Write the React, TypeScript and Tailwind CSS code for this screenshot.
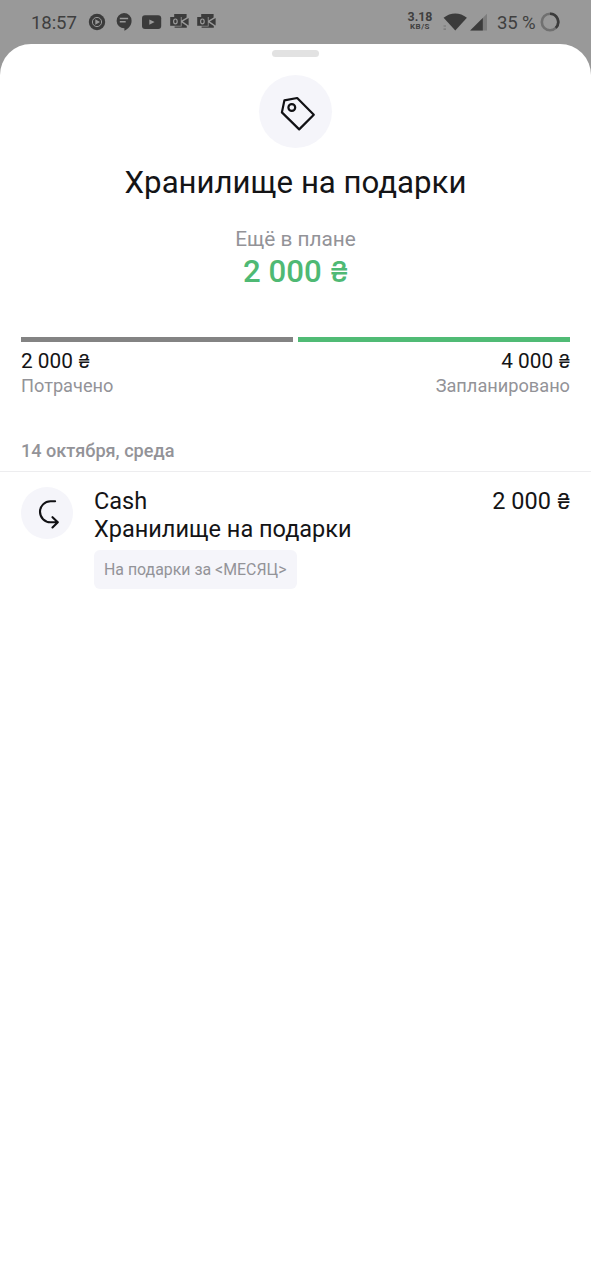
import React from "react";

function Money({ amount }: { amount: string }) {
  return (
    <>
      {amount} <span className="font-['Inter'] text-[0.93em] leading-none tracking-[-0.03em]">₴</span>
    </>
  );
}

function MailIcon() {
  return (
    <svg width="19" height="16" viewBox="0 0 19 16" fill="#3b3b3b">
      <path d="M4.2 1H16.6V4.4L11.6 7.4V4H4.2Z" />
      <path d="M0.2 4H10.8V12.8H0.2Z" />
      <path d="M18.6 5V12.4L12.8 8.5Z" />
      <path d="M11.6 9.4L16.8 13V14.8H4.6V13.4H11.6Z" />
      <ellipse cx="5.4" cy="8.4" rx="1.8" ry="2.4" fill="none" stroke="#999" strokeWidth="1.2" />
    </svg>
  );
}

function StatusBar() {
  return (
    <header className="flex h-11 items-start text-[#3f3f3f]">
      <span className="ml-[31px] mt-[11px] w-[46px] whitespace-nowrap text-[18.6px] leading-6 tracking-[-0.1px]">18:57</span>
      <svg className="ml-[11px] mt-[13px]" width="18" height="18" viewBox="0 0 18 18">
        <circle cx="9" cy="9" r="8.2" fill="#3b3b3b" />
        <circle cx="9" cy="9" r="4.6" fill="none" stroke="#999" strokeWidth="1" />
        <path d="M7.3 6.2L12 9L7.3 11.8Z" fill="#999" />
      </svg>
      <svg className="ml-[10px] mt-[13px]" width="17" height="19" viewBox="0 0 17 19">
        <path d="M8 0.1A7.6 7.6 0 0 1 15.6 7.7C15.6 12.3 12.4 15.8 8.4 17.8V15.3A7.6 7.6 0 1 1 8 0.1Z" fill="#3b3b3b" />
        <path d="M3.8 5.6H12.1M3.8 8.8H9.7" stroke="#999" strokeWidth="1.5" />
      </svg>
      <svg className="ml-[8px] mt-[15px]" width="21" height="15" viewBox="0 0 21 15">
        <rect x="1" y="0.2" width="19.2" height="13.8" rx="3" fill="#3b3b3b" />
        <path d="M8.3 4.4L13.6 7.1L8.3 9.8Z" fill="#999" />
      </svg>
      <div className="ml-[8px] mt-[13px] flex gap-2">
        <MailIcon />
        <MailIcon />
      </div>
      <div className="ml-auto mr-[10px] mt-[11px] w-[26px] text-center font-bold">
        <div className="text-[12.4px] leading-[12px]">3.18</div>
        <div className="text-[8px] leading-[8px] tracking-[0.5px]">KB/S</div>
      </div>
      <svg className="mt-[13px]" width="25" height="18" viewBox="0 0 25 18">
        <path d="M0.6 4.7C7.5 -1 17 -1 23.9 4.7L12.3 17.6Z" fill="#3b3b3b" />
        <path d="M0.5 13H3M0.5 16.2H3" stroke="#777" strokeWidth="1.2" />
      </svg>
      <svg className="ml-[2px] mt-[13px]" width="18" height="18" viewBox="0 0 18 18">
        <path d="M17 0.8V17.6H0.2Z" fill="#7d7d7d" />
        <path d="M12.8 5V17.6H0.2Z" fill="#3b3b3b" />
      </svg>
      <span className="ml-[9px] mt-[11px] w-[40px] whitespace-nowrap text-[18.6px] leading-6 tracking-[-0.2px]">35 %</span>
      <svg className="ml-[3px] mr-[31px] mt-[12px]" width="20" height="20" viewBox="0 0 20 20" fill="none" strokeWidth="2.6">
        <circle cx="10" cy="10" r="8.2" stroke="#707070" />
        <path d="M10 1.8A8.2 8.2 0 0 1 15.8 15.8" stroke="#3b3b3b" />
      </svg>
    </header>
  );
}

function TagIcon() {
  return (
    <svg width="73" height="73" viewBox="0 0 73 73" fill="none" stroke="#111114" strokeWidth="2.2" strokeLinejoin="round">
      <path d="M25.4 25.4L38.2 23L54.8 39.7L40.2 54.4L22.9 37.4Z" />
      <circle cx="32.8" cy="32.5" r="3.4" />
    </svg>
  );
}

function TransferIcon() {
  return (
    <svg width="52" height="52" viewBox="0 0 52 52" fill="none" stroke="#111114" strokeWidth="2.1" strokeLinecap="round" strokeLinejoin="round">
      <path d="M34.1 14.3H29.5A10.5 10.5 0 0 0 29.5 35.3H36.6M31.5 30.2L36.8 35.3L31.5 40.4" />
    </svg>
  );
}

export default function App() {
  return (
    <div className="flex h-[1280px] w-[591px] flex-col overflow-hidden bg-[#999999] font-['Roboto','Noto_Sans',sans-serif] text-[#141416]">
      <StatusBar />
      <main className="flex flex-1 flex-col rounded-t-[31px] bg-white">
        <div className="mx-auto mt-[6px] h-[7px] w-[47px] rounded-full bg-[#e2e2e2]" />
        <div className="mx-auto mt-[18px] size-[73px] rounded-full bg-[#f5f5fa]">
          <TagIcon />
        </div>
        <h1 className="mt-[15px] text-center text-[31.2px] leading-10">Хранилище на подарки</h1>
        <p className="mt-[24px] text-center text-[20.8px] leading-6 text-[#939398]">Ещё в плане</p>
        <p className="mt-[3px] h-9 text-center text-[31.2px] font-medium leading-9 text-[#4fb974]">
          <Money amount="2 000" />
        </p>
        <div className="mx-[21px] mt-[47px] flex h-[5px] gap-[5px]">
          <div className="flex-1 bg-[#838383]" />
          <div className="flex-1 bg-[#50bb75]" />
        </div>
        <div className="mx-[21px] mt-[7px] flex justify-between">
          <div>
            <p className="h-6 text-[20.8px] leading-6">
              <Money amount="2 000" />
            </p>
            <p className="mt-px text-[18.2px] leading-6 text-[#939398]">Потрачено</p>
          </div>
          <div className="text-right">
            <p className="h-6 text-[20.8px] leading-6">
              <Money amount="4 000" />
            </p>
            <p className="mt-px text-[18.2px] leading-6 text-[#939398]">Запланировано</p>
          </div>
        </div>
        <h2 className="mt-[41px] h-[33px] border-b border-[#ededef] px-[21px] text-[18.1px] font-medium leading-6 text-[#939398]">
          14 октября, среда
        </h2>
        <section className="mx-[21px] mt-[15px] flex items-start">
          <div className="size-[52px] rounded-full bg-[#f5f5fa]">
            <TransferIcon />
          </div>
          <div className="ml-[21px] flex flex-1 flex-col items-start text-[23.5px] leading-7">
            <div className="flex h-7 w-full justify-between">
              <span>Cash</span>
              <span>
                <Money amount="2 000" />
              </span>
            </div>
            <span>Хранилище на подарки</span>
            <span className="mt-[7px] flex h-[39px] items-center rounded-md bg-[#f5f5fa] px-[10px] text-[15.9px] text-[#939398]">
              {"На подарки за <МЕСЯЦ>"}
            </span>
          </div>
        </section>
      </main>
    </div>
  );
}
